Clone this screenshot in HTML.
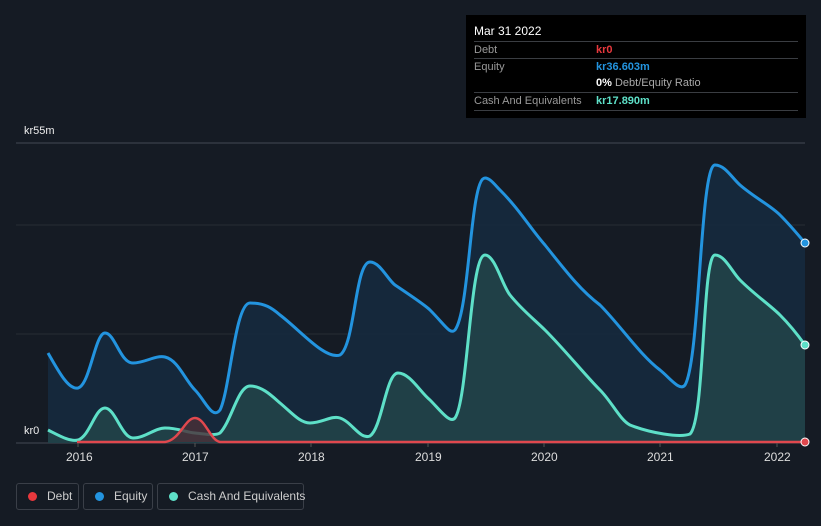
<!DOCTYPE html>
<html><head><style>
body{margin:0;background:#151b24;width:821px;height:526px;overflow:hidden;font-family:"Liberation Sans",sans-serif;position:relative}
.tt{position:absolute;left:466px;top:15px;width:340px;height:103px;background:#000;color:#fff;font-size:11px}
.tt .r{position:absolute;left:8px;width:324px;border-top:1px solid #3a3d42;height:17px;line-height:17px;color:#999}
.tt .v{position:absolute;left:122px;font-weight:bold}
.leg{position:absolute;top:483px;height:27px;border:1px solid #3a3f48;border-radius:3px;color:#ccc;font-size:12px;line-height:25px;box-sizing:border-box;white-space:nowrap}
.leg i{display:inline-block;width:9px;height:9px;border-radius:50%;margin:0 10px 0 11px;vertical-align:-1px}
.ax{position:absolute;top:450px;color:#ddd;font-size:12px}
</style></head><body>
<svg width="821" height="526" style="position:absolute;left:0;top:0">
<line x1="16" y1="143" x2="805" y2="143" stroke="#444a53"/>
<line x1="16" y1="225" x2="805" y2="225" stroke="#272c35"/>
<line x1="16" y1="334" x2="805" y2="334" stroke="#272c35"/>
<line x1="16" y1="443" x2="805" y2="443" stroke="#444a53"/>
<path d="M48,353 C58,370 68,390 78,388 C90,385 95,333 105,333 C115,333 120,363 133,363 C145,363 155,355 165,357 C178,360 185,380 195,390 C205,400 212,420 220,410 C230,390 235,303 250,303 C265,303 272,308 280,315 C300,330 325,360 340,355 C355,345 355,262 370,262 C380,262 388,280 395,285 C410,295 425,305 430,310 C445,325 450,335 455,330 C470,310 470,178 485,178 C490,178 495,185 500,190 C520,210 530,228 545,245 C565,270 580,290 600,305 C620,325 640,355 660,370 C670,378 680,392 685,385 C700,360 700,165 715,165 C725,165 732,178 740,185 C755,198 770,205 780,215 C790,225 800,237 805,243 L805,443 L48,443Z" fill="#152a40" fill-opacity=".85"/>
<path d="M48,353 C58,370 68,390 78,388 C90,385 95,333 105,333 C115,333 120,363 133,363 C145,363 155,355 165,357 C178,360 185,380 195,390 C205,400 212,420 220,410 C230,390 235,303 250,303 C265,303 272,308 280,315 C300,330 325,360 340,355 C355,345 355,262 370,262 C380,262 388,280 395,285 C410,295 425,305 430,310 C445,325 450,335 455,330 C470,310 470,178 485,178 C490,178 495,185 500,190 C520,210 530,228 545,245 C565,270 580,290 600,305 C620,325 640,355 660,370 C670,378 680,392 685,385 C700,360 700,165 715,165 C725,165 732,178 740,185 C755,198 770,205 780,215 C790,225 800,237 805,243" fill="none" stroke="#2394df" stroke-width="3"/>
<path d="M48,430 C60,436 70,442 78,440 C90,436 95,408 105,408 C115,408 122,438 133,438 C145,438 155,428 165,428 C178,428 185,432 195,433 C205,434 215,436 220,433 C232,420 238,386 250,386 C262,386 272,396 280,403 C292,413 300,423 310,423 C322,423 332,415 340,418 C352,422 360,440 370,436 C382,428 386,373 398,373 C410,373 420,392 430,400 C440,410 450,424 455,418 C468,400 470,255 485,255 C495,255 502,285 510,295 C522,310 535,320 545,330 C565,350 585,375 600,390 C612,402 620,420 630,425 C650,433 680,438 690,434 C705,420 702,255 715,255 C725,255 732,272 740,280 C755,295 770,305 780,315 C790,325 800,338 805,345 L805,443 L48,443Z" fill="#22444a" fill-opacity=".85"/>
<path d="M48,430 C60,436 70,442 78,440 C90,436 95,408 105,408 C115,408 122,438 133,438 C145,438 155,428 165,428 C178,428 185,432 195,433 C205,434 215,436 220,433 C232,420 238,386 250,386 C262,386 272,396 280,403 C292,413 300,423 310,423 C322,423 332,415 340,418 C352,422 360,440 370,436 C382,428 386,373 398,373 C410,373 420,392 430,400 C440,410 450,424 455,418 C468,400 470,255 485,255 C495,255 502,285 510,295 C522,310 535,320 545,330 C565,350 585,375 600,390 C612,402 620,420 630,425 C650,433 680,438 690,434 C705,420 702,255 715,255 C725,255 732,272 740,280 C755,295 770,305 780,315 C790,325 800,338 805,345" fill="none" stroke="#5ee0c8" stroke-width="3"/>
<path d="M165,442 C180,440 185,418 195,418 C205,418 210,440 220,442Z" fill="#4a3038" opacity=".8"/>
<path d="M77,442 L165,442 C180,440 185,418 195,418 C205,418 210,440 220,442 L805,442" fill="none" stroke="#e0484e" stroke-width="2.5"/>
<circle cx="805" cy="243" r="4" fill="#2394df" stroke="#fff" stroke-width="1"/>
<circle cx="805" cy="345" r="4" fill="#5ee0c8" stroke="#fff" stroke-width="1"/>
<circle cx="805" cy="442" r="4" fill="#e0484e" stroke="#fff" stroke-width="1"/>
<g stroke="#555" ><line x1="78" y1="443" x2="78" y2="447"/><line x1="195" y1="443" x2="195" y2="447"/><line x1="311" y1="443" x2="311" y2="447"/><line x1="428" y1="443" x2="428" y2="447"/><line x1="544" y1="443" x2="544" y2="447"/><line x1="660" y1="443" x2="660" y2="447"/><line x1="777" y1="443" x2="777" y2="447"/></g>
</svg>
<div style="position:absolute;left:24px;top:125px;color:#eee;font-size:11px">kr55m</div>
<div style="position:absolute;left:24px;top:425px;color:#eee;font-size:11px">kr0</div>
<div class="ax" style="left:66px">2016</div><div class="ax" style="left:182px">2017</div><div class="ax" style="left:298px">2018</div><div class="ax" style="left:415px">2019</div><div class="ax" style="left:531px">2020</div><div class="ax" style="left:647px">2021</div><div class="ax" style="left:764px">2022</div>
<div class="tt">
<div style="position:absolute;left:8px;top:9px;font-size:12px">Mar 31 2022</div>
<div class="r" style="top:26px">Debt<span class="v" style="color:#e8383d">kr0</span></div>
<div class="r" style="top:43px">Equity<span class="v" style="color:#2394df">kr36.603m</span></div>
<div class="r" style="top:60px;border-top:none"><span class="v" style="color:#fff">0% <span style="color:#aaa;font-weight:normal">Debt/Equity Ratio</span></span></div>
<div class="r" style="top:77px">Cash And Equivalents<span class="v" style="color:#5ee0c8">kr17.890m</span></div>
<div class="r" style="top:95px;height:0"></div>
</div>
<div class="leg" style="left:16px;width:63px"><i style="background:#e8383d"></i>Debt</div>
<div class="leg" style="left:83px;width:70px"><i style="background:#2394df"></i>Equity</div>
<div class="leg" style="left:157px;width:147px"><i style="background:#5ee0c8"></i>Cash And Equivalents</div>
</body></html>
